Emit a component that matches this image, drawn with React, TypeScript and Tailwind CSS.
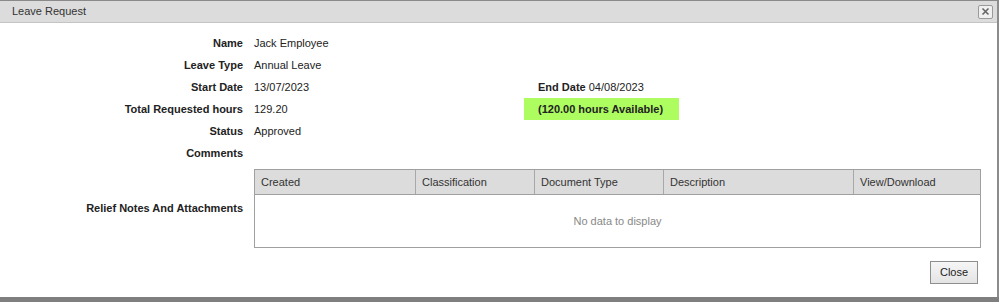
import React from "react";

const font = { fontFamily: '"Liberation Sans", Arial, sans-serif' };

function Row({ label, value, extra, green }: { label: string; value?: string; extra?: React.ReactNode; green?: boolean }) {
  return (
    <div className="flex h-[22px] items-center">
      <div className="w-[243px] shrink-0 text-right font-bold text-[#222]">{label}</div>
      <div className="w-[281px] shrink-0 pl-[11px] text-[#222]">{value}</div>
      {extra !== undefined && (
        <div className={`flex h-[22px] items-center pl-[14px] pr-[16px] text-[#222] ${green ? "bg-[#adfc60]" : ""}`}>{extra}</div>
      )}
    </div>
  );
}

export default function App() {
  const cols = [
    { name: "Created", w: "w-[161px]" },
    { name: "Classification", w: "w-[119px]" },
    { name: "Document Type", w: "w-[129px]" },
    { name: "Description", w: "w-[190px]" },
    { name: "View/Download", w: "flex-1" },
  ];
  return (
    <div className="flex h-[302px] w-[999px] flex-col bg-white text-[11px]" style={font}>
      <div className="flex flex-1 flex-col border-t border-t-[#8a8a8a] border-r-2 border-r-[#8c8c8c]">
        <div className="flex h-[22px] items-center justify-between border-b border-b-[#c4c4c4] bg-[#dcdcdc] pl-[12px] pr-[4px]">
          <span className="text-[11px] text-[#333]">Leave Request</span>
          <div className="flex h-[14px] w-[15px] items-center justify-center rounded-[2px] border border-[#9a9a9a] bg-[#f0f0f0]">
            <svg width="9" height="9" viewBox="0 0 9 9">
              <path d="M1.5 1.5 L7.5 7.5 M7.5 1.5 L1.5 7.5" stroke="#666" strokeWidth="1.6" />
            </svg>
          </div>
        </div>
        <div className="flex flex-col pt-[9px]">
          <Row label="Name" value="Jack Employee" />
          <Row label="Leave Type" value="Annual Leave" />
          <Row
            label="Start Date"
            value="13/07/2023"
            extra={
              <span>
                <b>End Date</b> 04/08/2023
              </span>
            }
          />
          <Row label="Total Requested hours" value="129.20" green extra={<span className="font-bold">(120.00 hours Available)</span>} />
          <Row label="Status" value="Approved" />
          <Row label="Comments" />
          <div className="mt-[5px] flex items-center">
            <div className="w-[243px] shrink-0 text-right font-bold text-[#222]">Relief Notes And Attachments</div>
            <div className="ml-[11px] flex h-[79px] w-[727px] flex-col border border-[#a0a0a0]">
              <div className="flex h-[25px] border-b border-b-[#a0a0a0] bg-[#dcdcdc]">
                {cols.map((c, i) => (
                  <div
                    key={c.name}
                    className={`${c.w} flex items-center pl-[6px] text-[#333] ${i < cols.length - 1 ? "border-r border-r-[#a8a8a8]" : ""}`}
                  >
                    {c.name}
                  </div>
                ))}
              </div>
              <div className="flex flex-1 items-center justify-center text-[#888]">No data to display</div>
            </div>
          </div>
          <div className="mt-[13px] flex justify-end pr-[19px]">
            <button className="h-[23px] w-[48px] border border-[#8e8e8e] bg-gradient-to-b from-[#f6f6f6] to-[#e4e4e4] text-[11px] text-[#222]">
              Close
            </button>
          </div>
        </div>
      </div>
      <div className="h-[5px] bg-[#7f7f7f]" />
    </div>
  );
}
